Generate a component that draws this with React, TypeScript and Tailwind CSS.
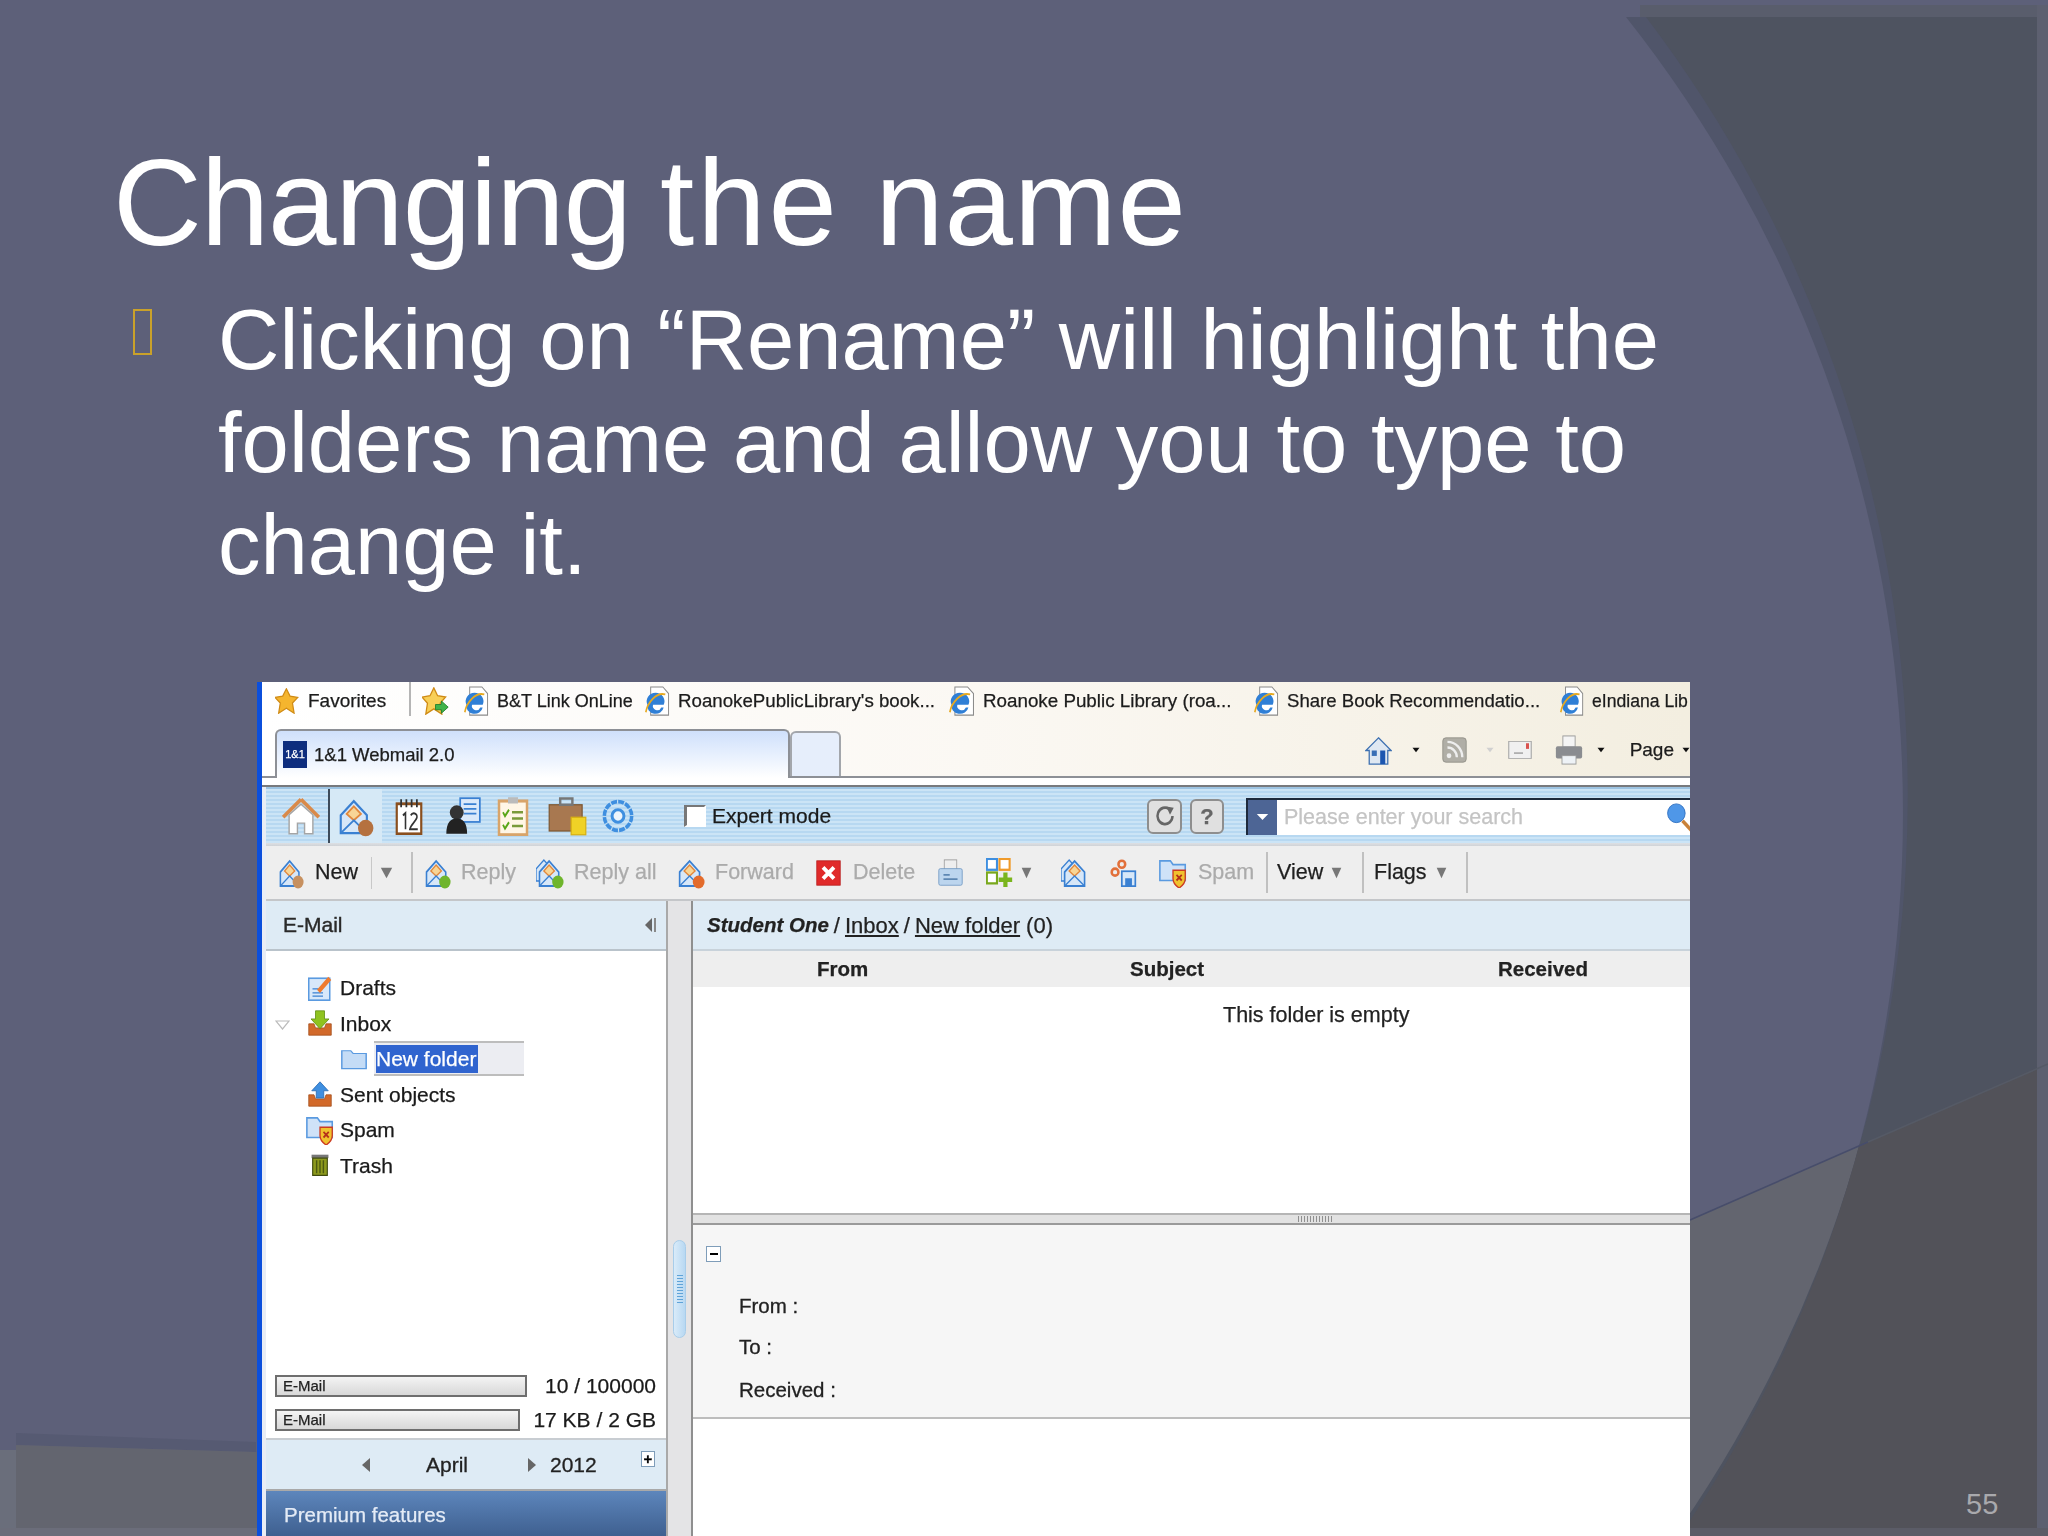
import type { ReactNode } from "react";

// small icons, drawn on a 32 grid and stretched by their class
function Ico({ c, children }: { c: string; children: ReactNode }) {
  return (
    <svg viewBox="0 0 32 32" preserveAspectRatio="none" className={"shrink-0 " + c}>
      {children}
    </svg>
  );
}

const StarPts = "14,1 18.5,10 28,11.5 21.5,18.5 23.5,31 14,25 4.5,31 6.5,18.5 0,11.5 9.5,10";

function Star({ c }: { c: string }) {
  return <Ico c={c}><polygon points={StarPts} fill="#f5b52e" stroke="#cf8a14" strokeWidth="1.5" /></Ico>;
}

function StarAdd({ c }: { c: string }) {
  return (
    <Ico c={c}>
      <polygon points={StarPts} fill="#f8cf57" stroke="#cf8a14" strokeWidth="1.5" />
      <path d="M16 20h7v-4l8 7-8 7v-4h-7z" fill="#3fb34a" stroke="#1f7d2c" strokeWidth="1" />
    </Ico>
  );
}

function IePage({ c }: { c: string }) {
  return (
    <Ico c={c}>
      <path d="M7 1h15l7 7v23H7z" fill="#fff" stroke="#8a8a8a" strokeWidth="1.2" />
      <path d="M3 20a11 9 0 1 1 20 0H10a5 4 0 0 0 10 3h3a10 8 0 0 1-20-3z" fill="#2f7fd6" />
      <path d="M1 28C3 18 14 6 25 9" fill="none" stroke="#e6a921" strokeWidth="2" />
    </Ico>
  );
}

function Mail({ c, badge, extra }: { c: string; badge?: string; extra?: boolean }) {
  return (
    <Ico c={c}>
      {extra && <path d="M0 12 L9 3 L18 12 V24 H0Z" fill="#d7e7f8" stroke="#3a80d2" strokeWidth="1.5" />}
      <path d="M4 15 L15 4 L26 15 V29 H4 Z" fill="#d7e7f8" stroke="#3a80d2" strokeWidth="1.8" />
      <path d="M9 14 L15 8 L21 14 L15 19Z" fill="#f8d596" stroke="#e2883c" strokeWidth="1.5" />
      <path d="M4 29 L15 19 L26 29" fill="none" stroke="#3a80d2" strokeWidth="1.5" />
      {badge && <circle cx="25" cy="25" r="6.5" fill={badge} />}
    </Ico>
  );
}

function Caret({ c, color = "#777" }: { c: string; color?: string }) {
  return <Ico c={c}><polygon points="2,4 30,4 16,28" fill={color} /></Ico>;
}

function Tray({ c, up }: { c: string; up?: boolean }) {
  return (
    <Ico c={c}>
      <path d="M1 17h7l2 5h12l2-5h7v14H1z" fill="#d2692a" stroke="#a34f1c" strokeWidth="1" />
      {up ? (
        <path d="M16 1l11 11h-6v9H11v-9H5z" fill="#3f8fe0" stroke="#2667b0" strokeWidth="1" />
      ) : (
        <path d="M10 1h12v10h6L16 23 4 11h6z" fill="#8fc31f" stroke="#5d8a10" strokeWidth="1" />
      )}
    </Ico>
  );
}

function Folder({ c }: { c: string }) {
  return <Ico c={c}><path d="M1 7V4h11l3 4h16v22H1z" fill="#c4dcf6" stroke="#5a9ae0" strokeWidth="1.8" /></Ico>;
}

function Shield({ c }: { c: string }) {
  return (
    <Ico c={c}>
      <path d="M1 24V3h12l3 4h14v17z" fill="#cfe2f8" stroke="#5a9ae0" strokeWidth="1.8" />
      <path d="M16 13h14v9c0 5-4 8-7 10-3-2-7-5-7-10z" fill="#f0c22e" stroke="#cc3b22" strokeWidth="1.5" />
      <path d="M20 18l6 6M26 18l-6 6" stroke="#b5301a" strokeWidth="2" />
    </Ico>
  );
}

const FAVS = [
  { t: "B&T Link OnLine", w: "ml-[15px] w-[26px]", tw: "w-[132px] text-[18px]" },
  { t: "RoanokePublicLibrary's book...", w: "ml-[16px] w-[26px]", tw: "w-[256px] text-[18.7px]" },
  { t: "Roanoke Public Library (roa...", w: "ml-[15px] w-[27px]", tw: "w-[248px] text-[18.8px]" },
  { t: "Share Book Recommendatio...", w: "ml-[23px] w-[26px]", tw: "w-[252px] text-[18.6px]" },
  { t: "eIndiana Lib", w: "ml-[21px] w-[25px]", tw: "w-[96px] text-[17.6px]" },
];

function Tree({ label, icon, children }: { label: string; icon: ReactNode; children?: ReactNode }) {
  return (
    <div className="relative flex h-[35.5px] items-center pl-[42px]">
      {children}
      <span className="flex w-[32px] justify-start">{icon}</span>
      <span className="text-[21px] text-[#1a1a1a]">{label}</span>
    </div>
  );
}

function Meter({ w, value }: { w: string; value: string }) {
  return (
    <div className="flex h-[22px] items-center justify-between pl-[9px] pr-[10px]">
      <div className={"flex h-full items-center border-2 border-[#6e6e6e] bg-gradient-to-b from-[#f4f4f4] to-[#d8d8d8] pl-[6px] text-[15px] text-[#222] " + w}>E-Mail</div>
      <span className="text-[21px] text-[#1a1a1a]">{value}</span>
    </div>
  );
}

function Window() {
  return (
    <div className="ml-[257px] flex h-[854px] w-[1433px] overflow-hidden blur-[0.4px] [-webkit-text-stroke-width:0.25px]">
      <div className="w-[5px] shrink-0 bg-[#0b4fdc]" />
      <div className="flex w-[1428px] flex-col">
        {/* browser chrome */}
        <div className="h-[96px] bg-gradient-to-r from-white via-[#fbf8f3] to-[#f3eee0]">
          <div className="flex h-[48px] items-center pb-[10px] text-[#1c1c1c]">
            <Star c="ml-[13px] h-[26px] w-[26px]" />
            <span className="ml-[7px] w-[79px] shrink-0 text-[19px]">Favorites</span>
            <div className="ml-[22px] h-[34px] w-[2px] shrink-0 self-start bg-[#b5b5b5]" />
            <StarAdd c="ml-[11px] h-[28px] w-[27px]" />
            {FAVS.map((f) => (
              <div key={f.t} className="flex shrink-0 items-center">
                <div className={f.w}><IePage c="h-[30px] w-full" /></div>
                <span className={"ml-[7px] whitespace-nowrap " + f.tw}>{f.t}</span>
              </div>
            ))}
          </div>
          <div className="flex h-[48px] items-end border-b-2 border-[#8d9096]">
            <div className="-mb-[2px] ml-[13px] flex h-[49px] w-[517px] items-center rounded-t-[6px] border-x-2 border-t-2 border-[#8d9096] bg-gradient-to-b from-[#cfe0fb] to-white pl-[6px]">
              <span className="flex h-[27px] w-[24px] items-center justify-center bg-[#0d2d7e] text-[11px] text-white">1&amp;1</span>
              <span className="ml-[7px] text-[18.5px] text-[#1c1c1c]">1&amp;1 Webmail 2.0</span>
            </div>
            <div className="h-[45px] w-[51px] rounded-t-[6px] border-x-2 border-t-2 border-[#a3a6ab] bg-[#e6eefb]" />
            <div className="flex h-full items-center pb-[6px]">
              <Ico c="ml-[524px] h-[29px] w-[27px]">
                <path d="M16 2L31 16h-4v15H5V16H1z" fill="#dfe8f2" stroke="#3c6fb0" strokeWidth="1.5" />
                <rect x="18" y="16" width="6" height="15" fill="#1c56b0" />
                <rect x="8" y="16" width="6" height="6" fill="#3a6fb5" />
              </Ico>
              <Caret c="ml-[20px] h-[6px] w-[8px]" color="#111" />
              <Ico c="ml-[22px] h-[26px] w-[25px]">
                <rect x="1" y="1" width="30" height="30" rx="4" fill="#b0aea6" stroke="#8d8b83" />
                <circle cx="9" cy="23" r="3" fill="#eee" />
                <path d="M7 13a12 12 0 0 1 12 12M7 6a19 19 0 0 1 19 19" fill="none" stroke="#eee" strokeWidth="3" />
              </Ico>
              <Caret c="ml-[19px] h-[6px] w-[8px]" color="#d0d0d0" />
              <Ico c="ml-[14px] h-[18px] w-[24px]">
                <rect x="1" y="1" width="30" height="30" fill="#f0f0f0" stroke="#a8a8a8" strokeWidth="1.5" />
                <rect x="8" y="20" width="12" height="3" fill="#aaa" />
                <rect x="24" y="4" width="4" height="10" fill="#d9534f" />
              </Ico>
              <Ico c="ml-[23px] h-[30px] w-[28px]">
                <rect x="9" y="1" width="14" height="12" fill="#f4f4f4" stroke="#999" />
                <rect x="1" y="12" width="30" height="13" rx="2" fill="#8a8c90" />
                <rect x="8" y="22" width="16" height="9" fill="#eef2f6" stroke="#999" />
              </Ico>
              <Caret c="ml-[14px] h-[6px] w-[8px]" color="#111" />
              <span className="ml-[25px] text-[19px] text-[#1c1c1c]">Page</span>
              <Caret c="ml-[8px] h-[6px] w-[8px]" color="#111" />
            </div>
          </div>
        </div>
        <div className="h-[7px] bg-white" />
        <div className="h-[2px] bg-[#77797d]" />

        <div className="flex flex-1 flex-col bg-[#e9edf5] pl-[4px]">
          {/* app nav */}
          <div className="flex h-[56px] items-center border-t-2 border-[#9cc3e2] bg-[repeating-linear-gradient(180deg,#cbe4f6_0px,#cbe4f6_2px,#b7d8f1_2px,#b7d8f1_4px)]">
            <Ico c="ml-[16px] h-[38px] w-[38px]">
              <path d="M16 2L31 17M16 2L1 17" stroke="#d98a4a" strokeWidth="3" fill="none" />
              <path d="M6 15L16 6l10 9v16h-7v-9h-6v9H6z" fill="#fff" stroke="#a5a5a5" strokeWidth="1.2" />
            </Ico>
            <div className="ml-[8px] flex h-full w-[54px] items-center border-l-2 border-[#3d4b5a] bg-[#d6e9f6] pl-[6px]">
              <Mail c="h-[41px] w-[38px]" badge="#b5713f" />
            </div>
            <Ico c="ml-[13px] h-[37px] w-[28px]">
              <rect x="2" y="5" width="28" height="26" fill="#fff" stroke="#8a4f1e" strokeWidth="2.5" />
              <path d="M7 1v7M13 1v7M19 1v7M25 1v7" stroke="#333" strokeWidth="2" />
              <path d="M9 15l3-2v14M18 15c2-3 8-2 7 2-1 3-7 6-8 10h9" fill="none" stroke="#333" strokeWidth="1.8" />
            </Ico>
            <Ico c="ml-[21px] h-[38px] w-[37px]">
              <rect x="14" y="1" width="17" height="20" fill="#dbe9fa" stroke="#3a80d2" strokeWidth="1.5" />
              <path d="M17 6h11M17 10h11M17 14h11" stroke="#3a80d2" strokeWidth="1.5" />
              <circle cx="11" cy="13" r="6" fill="#333" />
              <path d="M2 31c0-10 4-13 9-13s9 3 9 13z" fill="#222" />
            </Ico>
            <Ico c="ml-[16px] h-[40px] w-[32px]">
              <rect x="2" y="4" width="28" height="27" fill="#fff6e6" stroke="#d8a46a" strokeWidth="2.5" />
              <rect x="11" y="1" width="10" height="5" fill="#bbb" />
              <path d="M6 13l2 3 4-5M6 23l2 3 4-5" fill="none" stroke="#58a618" strokeWidth="1.8" />
              <path d="M15 13h11M15 18h11M15 24h11" stroke="#7a9a3a" strokeWidth="2" />
            </Ico>
            <Ico c="ml-[19px] h-[40px] w-[39px]">
              <rect x="1" y="7" width="27" height="21" fill="#a87850" stroke="#7d5834" />
              <rect x="10" y="2" width="10" height="5" fill="none" stroke="#777" strokeWidth="2" />
              <rect x="19" y="17" width="12" height="14" fill="#f0d226" stroke="#d8b010" />
            </Ico>
            <Ico c="ml-[12px] h-[40px] w-[38px]">
              <circle cx="16" cy="16" r="11.5" fill="none" stroke="#3f8fe0" strokeWidth="3" strokeDasharray="5 1" />
              <circle cx="16" cy="16" r="5" fill="#eef5fc" stroke="#3f8fe0" strokeWidth="2.5" />
            </Ico>
            <div className="ml-[47px] h-[22px] w-[22px] border-2 border-l-[3px] border-[#777] border-r-white border-b-white bg-white" />
            <span className="ml-[6px] w-[120px] whitespace-nowrap text-[21px] text-[#1a1a1a]">Expert mode</span>
            <div className="ml-[315px] flex h-[35px] w-[35px] items-center justify-center rounded-[6px] border-2 border-[#8e8e8e] bg-[#e0e0e0]">
              <Ico c="h-[22px] w-[20px]"><path d="M28 16a12 12 0 1 1-5-10" fill="none" stroke="#666" strokeWidth="4" /><polygon points="18,2 30,4 24,14" fill="#666" /></Ico>
            </div>
            <div className="ml-[8px] flex h-[35px] w-[34px] items-center justify-center rounded-[6px] border-2 border-[#8e8e8e] bg-[#e0e0e0] text-[22px] font-bold text-[#666]">?</div>
            <div className="ml-[22px] flex h-[37px] flex-1 items-center overflow-hidden border-l-2 border-t-2 border-[#1e2a3c] bg-white">
              <div className="flex h-full w-[29px] shrink-0 items-center justify-center bg-[#4d6595]">
                <Caret c="h-[8px] w-[13px]" color="#fff" />
              </div>
              <span className="ml-[7px] whitespace-nowrap text-[21.5px] text-[#c4c4c4]">Please enter your search</span>
              <Ico c="-mr-[3px] ml-auto h-[30px] w-[28px] shrink-0">
                <circle cx="13" cy="12" r="10" fill="#4f97e8" stroke="#2e6fc0" />
                <path d="M20 20l11 11" stroke="#c9823a" strokeWidth="4" />
              </Ico>
            </div>
          </div>
          <div className="h-[3px] bg-gradient-to-b from-[#dde0e4] to-[#cfd2d6]" />

          {/* mail actions */}
          <div className="flex h-[55px] shrink-0 items-center border-b-2 border-[#c4c6c9] bg-[#eeeeee] text-[21.5px]">
            <Mail c="ml-[11px] h-[32px] w-[27px]" badge="#c7905f" />
            <span className="ml-[11px] w-[44px] text-[#1f1f1f]">New</span>
            <div className="ml-[12px] h-[32px] w-px bg-[#c8c8c8]" />
            <Caret c="ml-[8px] h-[14px] w-[13px]" />
            <div className="ml-[18px] h-[41px] w-[2px] bg-[#c0c0c0]" />
            <Mail c="ml-[10px] h-[32px] w-[28px]" badge="#6fb52c" />
            <span className="ml-[10px] w-[55px] text-[#ababab]">Reply</span>
            <Mail c="ml-[20px] h-[32px] w-[28px]" badge="#6fb52c" extra />
            <span className="ml-[10px] w-[81px] whitespace-nowrap text-[#ababab]">Reply all</span>
            <Mail c="ml-[21px] h-[32px] w-[29px]" badge="#e36b2c" />
            <span className="ml-[10px] w-[78px] text-[#ababab]">Forward</span>
            <Ico c="ml-[23px] h-[26px] w-[25px]">
              <rect x="1" y="1" width="30" height="30" fill="#e02a2a" stroke="#b81d1d" />
              <path d="M9 9l14 14M23 9L9 23" stroke="#fff" strokeWidth="5" />
            </Ico>
            <span className="ml-[12px] w-[62px] text-[#ababab]">Delete</span>
            <Ico c="ml-[23px] h-[28px] w-[25px]">
              <rect x="8" y="1" width="16" height="12" fill="#eee" stroke="#999" />
              <rect x="1" y="11" width="30" height="19" rx="2" fill="#bcd5ee" stroke="#6f97c2" />
              <path d="M7 18h8M7 23h18" stroke="#5d87b3" strokeWidth="2" />
            </Ico>
            <Ico c="ml-[23px] h-[29px] w-[27px]">
              <rect x="1" y="1" width="12" height="12" fill="#fff" stroke="#3f8fe0" strokeWidth="2.5" />
              <rect x="16" y="1" width="12" height="12" fill="#fff" stroke="#ef9a2a" strokeWidth="2.5" />
              <rect x="1" y="16" width="12" height="12" fill="#fff" stroke="#79a81d" strokeWidth="2.5" />
              <path d="M23 16v16M15 24h16" stroke="#7ab51d" strokeWidth="5" />
            </Ico>
            <Caret c="ml-[8px] h-[14px] w-[11px]" />
            <Mail c="ml-[29px] h-[32px] w-[29px]" extra />
            <Ico c="ml-[20px] h-[28px] w-[27px]">
              <circle cx="14" cy="6" r="4" fill="none" stroke="#e2703a" strokeWidth="3" />
              <circle cx="6" cy="15" r="4" fill="none" stroke="#e2703a" strokeWidth="3" />
              <rect x="14" y="14" width="16" height="17" fill="#d7e7f8" stroke="#3a80d2" strokeWidth="2" />
              <rect x="18" y="22" width="8" height="9" fill="#3a80d2" />
            </Ico>
            <Shield c="ml-[22px] h-[30px] w-[28px]" />
            <span className="ml-[11px] w-[56px] text-[#ababab]">Spam</span>
            <div className="ml-[12px] h-[41px] w-[2px] bg-[#c0c0c0]" />
            <span className="ml-[9px] w-[46px] text-[#1f1f1f]">View</span>
            <Caret c="ml-[8px] h-[14px] w-[11px]" />
            <div className="ml-[20px] h-[41px] w-[2px] bg-[#c0c0c0]" />
            <span className="ml-[10px] w-[53px] text-[#1f1f1f]">Flags</span>
            <Caret c="ml-[9px] h-[14px] w-[11px]" />
            <div className="ml-[19px] h-[41px] w-[2px] bg-[#c0c0c0]" />
          </div>

          <div className="flex min-h-0 flex-1">
            {/* folders */}
            <div className="flex w-[402px] flex-col border-r-2 border-[#a9a9a9] bg-white">
              <div className="flex h-[50px] shrink-0 items-center justify-between border-b-2 border-[#b9c3cb] bg-[#deebf5] pl-[17px] pr-[10px]">
                <span className="text-[21px] text-[#2a2a2a] [-webkit-text-stroke:0.4px_#2a2a2a]">E-Mail</span>
                <div className="flex items-center gap-[2px]">
                  <Ico c="h-[14px] w-[7px]"><polygon points="32,0 32,32 0,16" fill="#666" /></Ico>
                  <div className="h-[14px] w-[2px] bg-[#888]" />
                </div>
              </div>
              <div className="pt-[19px]">
                <Tree label="Drafts" icon={
                  <Ico c="h-[26px] w-[24px]">
                    <rect x="1" y="4" width="28" height="27" fill="#d8e8fa" stroke="#5a9ae0" strokeWidth="2" />
                    <path d="M6 17h8M6 22h14M6 26h14" stroke="#3a80d2" strokeWidth="1.5" />
                    <path d="M12 18L27 2l4 4-15 16z" fill="#ee7a2f" />
                  </Ico>
                } />
                <Tree label="Inbox" icon={<Tray c="h-[26px] w-[24px]" />}>
                  <Ico c="absolute left-[9px] top-[14px] h-[10px] w-[15px]">
                    <polygon points="2,3 30,3 16,29" fill="#fff" stroke="#bbb" strokeWidth="3" />
                  </Ico>
                </Tree>
                <div className="flex h-[35.5px] items-center pl-[75px]">
                  <Folder c="h-[22px] w-[26px]" />
                  <div className="ml-[7px] flex h-[35px] w-[150px] items-center border-y-2 border-[#bdbdbd] bg-[#ecedf2]">
                    <span className="ml-[2px] flex h-[28px] w-[102px] items-center overflow-hidden whitespace-nowrap bg-[#3064cf] text-[21px] text-white">New folder</span>
                  </div>
                </div>
                <Tree label="Sent objects" icon={<Tray c="h-[26px] w-[24px]" up />} />
                <Tree label="Spam" icon={<Shield c="-ml-[2px] h-[30px] w-[28px]" />} />
                <Tree label="Trash" icon={
                  <Ico c="ml-[3px] h-[22px] w-[18px]">
                    <rect x="1" y="1" width="30" height="5" fill="#777" />
                    <path d="M3 6h26v25H3z" fill="#8d9a1d" stroke="#3f4a0e" strokeWidth="2" />
                    <path d="M10 9v19M16 9v19M22 9v19" stroke="#4d5a10" strokeWidth="2.5" />
                  </Ico>
                } />
              </div>
              <div className="mt-auto flex flex-col gap-[12px]">
                <Meter w="w-[252px]" value="10 / 100000" />
                <Meter w="w-[245px]" value="17 KB / 2 GB" />
              </div>
              <div className="mt-[7px] flex h-[53px] shrink-0 items-center border-y-2 border-t-[#c8cdd2] border-b-[#a9a9a9] bg-[#deebf5] text-[21px] text-[#222]">
                <Ico c="ml-[96px] h-[14px] w-[8px]"><polygon points="32,0 32,32 0,16" fill="#666" /></Ico>
                <span className="ml-[56px] w-[45px] [-webkit-text-stroke:0.3px_#222]">April</span>
                <Ico c="ml-[57px] h-[14px] w-[8px]"><polygon points="0,0 32,16 0,32" fill="#666" /></Ico>
                <span className="ml-[14px] w-[48px] [-webkit-text-stroke:0.3px_#222]">2012</span>
                <div className="relative -top-[6px] ml-[43px] flex h-[16px] w-[14px] items-center justify-center border border-[#7f9db9] bg-white text-[15px] font-bold leading-none text-black">+</div>
              </div>
              <div className="flex h-[45px] shrink-0 items-center bg-gradient-to-b from-[#5d86bc] to-[#3f6090] pl-[18px] pt-[3px] text-[20.5px] text-[#e4ebf6]">Premium features</div>
            </div>

            {/* splitter */}
            <div className="flex w-[25px] flex-col items-center border-r-2 border-[#8f8f8f] bg-[#e4e4e6] pt-[339px]">
              <div className="flex h-[98px] w-[13px] items-center justify-center rounded-full border border-[#a8cdea] bg-gradient-to-r from-[#d9ebf9] to-[#b8d8f2]">
                <div className="h-[28px] w-[6px] bg-[repeating-linear-gradient(180deg,#5fa3d8_0px,#5fa3d8_1px,transparent_1px,transparent_3px)]" />
              </div>
            </div>

            {/* message list and preview */}
            <div className="flex flex-1 flex-col bg-white">
              <div className="flex h-[50px] items-center border-b-2 border-[#c8d2da] bg-[#deebf5] pl-[14px] text-[22px] text-[#222]">
                <span className="text-[20.5px] font-bold italic">Student One</span>
                <span className="mx-[5px]">/</span>
                <span className="underline">Inbox</span>
                <span className="mx-[5px]">/</span>
                <span className="underline">New folder</span>
                <span className="ml-[6px]">(0)</span>
              </div>
              <div className="flex h-[36px] items-center bg-[#eeeeee] text-[20.5px] font-bold text-[#222]">
                <span className="ml-[124px] w-[313px]">From</span>
                <span className="w-[368px]">Subject</span>
                <span>Received</span>
              </div>
              <div className="h-[226px] pl-[530px] pt-[12px] text-[21.5px] text-[#222]">This folder is empty</div>
              <div className="flex h-[12px] items-center border-y-2 border-t-[#b5b5b5] border-b-[#9a9a9a] bg-[#e2e2e2] pl-[605px]">
                <div className="h-[6px] w-[34px] bg-[repeating-linear-gradient(90deg,#8f8f8f_0px,#8f8f8f_1px,transparent_1px,transparent_3px)]" />
              </div>
              <div className="flex h-[194px] flex-col border-b-2 border-[#bdbdbd] bg-[#f6f6f6] pl-[46px] text-[20.5px] text-[#222] [-webkit-text-stroke:0.3px_#222]">
                <div className="-ml-[33px] mt-[21px] flex h-[16px] w-[15px] items-center justify-center border border-[#7f9db9] bg-white">
                  <div className="h-[2px] w-[8px] bg-black" />
                </div>
                <span className="mt-[32px] leading-[24px]">From :</span>
                <span className="mt-[17px] leading-[24px]">To :</span>
                <span className="mt-[19px] leading-[24px]">Received :</span>
              </div>
            </div>
          </div>
        </div>
      </div>
    </div>
  );
}

export default function App() {
  return (
    <div className="relative h-[1536px] w-[2048px] overflow-hidden bg-[#5d6079] [font-family:'Liberation_Sans',Arial,sans-serif]">
      {/* slide theme shapes */}
      <svg viewBox="0 0 2048 1536" className="absolute inset-0 h-full w-full">
        <defs>
          <clipPath id="lower">
            <path d="M16 1445 L256 1452 L700 1400 L1690 1220 L2037 1068 L2037 1528 L16 1528Z" />
          </clipPath>
        </defs>
        <rect x="1640" y="5" width="408" height="12" fill="#595d6c" />
        <rect x="2037" y="5" width="11" height="1531" fill="#5d6070" />
        <rect x="0" y="1450" width="16" height="86" fill="#6a6e7b" />
        <rect x="0" y="1528" width="1700" height="8" fill="#6b6d7a" />
        <rect x="1690" y="1528" width="358" height="8" fill="#5b5c67" />
        <path d="M16 1433 L256 1442 L256 1452 L16 1445Z" fill="#565a72" />
        <path d="M16 1445 L256 1452 L700 1400 L1690 1220 L2037 1068 L2037 1528 L16 1528Z" fill="#63656f" />
        <path d="M1626 17 L2037 17 L2037 1528 L1685 1528 A1282 1282 0 0 0 1626 17Z" fill="#50556a" />
        <path d="M1646 17 L2037 17 L2037 1528 L1680 1528 A1272 1282 0 0 0 1646 17Z" fill="#4e5360" />
        <g clipPath="url(#lower)">
          <path d="M1626 17 L2037 17 L2037 1528 L1685 1528 A1282 1282 0 0 0 1626 17Z" fill="#525259" />
        </g>
        <path d="M1690 1220 L1868 1142" stroke="#474d6b" strokeWidth="1.5" fill="none" />
        <path d="M1868 1142 L2048 1064" stroke="#555a66" strokeWidth="1.5" fill="none" />
      </svg>

      <div className="relative flex h-full flex-col">
        <h1 className="ml-[113px] mt-[142px] whitespace-nowrap text-[123px] font-normal leading-[122px] text-white">
          <span className="tracking-[-1.1px]">Changing</span>{" "}
          <span className="-ml-[5px] tracking-[3px]">the</span>{" "}
          <span className="ml-[1px] tracking-[1px]">name</span>
        </h1>
        <div className="mt-[25px] flex h-[308px] items-start">
          <div className="ml-[133px] mt-[20px] h-[46px] w-[19px] border-2 border-[#c9a12a]" />
          <p className="ml-[66px] w-[1500px] text-[85px] leading-[102.5px] text-white">
            Clicking on “Rename” will highlight the<br />folders name and allow you to type to<br />change it.
          </p>
        </div>
        <div className="mt-[85px]">
          <Window />
        </div>
      </div>

      <span className="absolute left-[1966px] top-[1488px] text-[29px] leading-[33px] text-[#a9a9ad]">55</span>
    </div>
  );
}
